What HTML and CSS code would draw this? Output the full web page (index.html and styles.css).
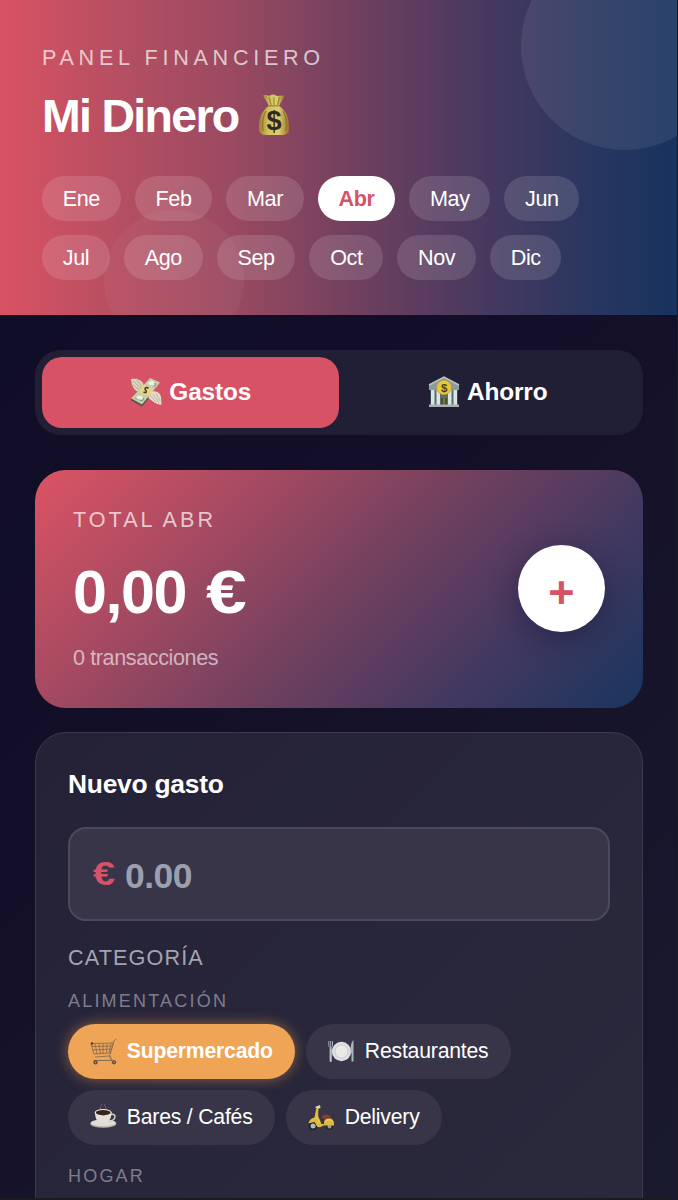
FILE: index.html
```html
<!DOCTYPE html>
<html lang="es">
<head>
<meta charset="utf-8">
<title>Mi Dinero</title>
<link rel="stylesheet" href="styles.css">
</head>
<body>
<div class="app">
  <header class="header">
    <div class="eyebrow">PANEL FINANCIERO</div>
    <h1 class="title"><span>Mi Dinero</span>
      <svg class="bag" viewBox="0 0 34 44">
        <defs>
          <linearGradient id="bagFill" x1="0" x2="1" y1="0" y2="0"><stop offset="0" stop-color="#9b7f35"/><stop offset=".3" stop-color="#d2bf5e"/><stop offset=".65" stop-color="#ddce70"/><stop offset="1" stop-color="#977328"/></linearGradient>
        </defs>
        <path d="M6 2.500C9 1 11 3.500 13 2.500s4-1.500 6 0 5-1 8.500.5C26 7 23 9.500 22.500 13h-11C11 9 8 7 6 2.500Z" fill="url(#bagFill)"/>
        <path d="M11.500 13h11C29 18 32.500 25 32 36c0 4-3 6-7 6H9c-4 0-7-2-7-6C1.500 25 5 18 11.500 13Z" fill="url(#bagFill)"/>
        <path d="M10.500 12.800h13M12 4l2 8M17 4v8M22.500 4l-2 8M9 18c-3 5-4 12-3 20M26 18c3 5 4 12 3 20" fill="none" stroke="#866320" stroke-width="1.200" opacity=".65"/>
        <text class="bag-sign" x="17" y="37" text-anchor="middle">$</text>
      </svg>
    </h1>
    <nav class="months">
      <span class="month">Ene</span><span class="month">Feb</span><span class="month">Mar</span><span class="month month-on">Abr</span><span class="month">May</span><span class="month">Jun</span>
      <span class="month">Jul</span><span class="month">Ago</span><span class="month">Sep</span><span class="month">Oct</span><span class="month">Nov</span><span class="month">Dic</span>
    </nav>
  </header>
  <main class="main">
    <div class="tabs">
      <div class="tab tab-on">
        <svg class="tab-icon" viewBox="0 0 32 30">
          <path d="M1 2c5-1 9 0 12 4l2 6-4 3C6 15 2 12 1 2Z" fill="#d9d6bd"/>
          <path d="M3 4l9 8M3 8l8 6M7 3l6 8" stroke="#a7a18c" stroke-width=".8" fill="none"/>
          <path d="M20 1 30 5.500 28 8 12 27.500 1 21.500 9 13Z" fill="#c6ceb2"/>
          <path d="M12 27.500 1 21.500v2L12 29.500 20 20v-2Z" fill="#4b5b48"/>
          <path d="M19 15c6-2 11 0 12 5l.5 8-4-1-4-2-5-4Z" fill="#e6dccd"/>
          <path d="M23 17l6 9M20 18l6 7M26 16l4 8" stroke="#b5a595" stroke-width=".8" fill="none"/>
          <path d="M12.500 7.500 23 12 20 19.500 9 15.500Z" fill="#e8d286"/>
          <path d="M19 4l7 3-2 3M5 21l7 3 2-3" stroke="#7d8e78" fill="none"/>
          <ellipse cx="21.500" cy="6" rx="3" ry="2" fill="#eef0d9"/><ellipse cx="9.500" cy="20.500" rx="3" ry="2" fill="#eef0d9"/>
          <path d="M18.500 11.500c-1.500-2-4.500-.5-3 1.500s1 3.500-2 2" stroke="#423d22" stroke-width="1.500" fill="none"/>
        </svg><span>Gastos</span>
      </div>
      <div class="tab">
        <svg class="tab-icon" viewBox="0 0 32 32">
          <path d="M16 1 31 9v5H1V9Z" fill="#8d9c9d"/>
          <path d="M1 9 16 1l15 8" fill="none" stroke="#b9c4c2" stroke-width="1.500"/>
          <path d="M2.500 14h27v15h-27Z" fill="#586d70"/>
          <path d="M3 14h3.500v15H3ZM8.500 14H12v15H8.500ZM20 14h3.500v15H20ZM25.500 14H29v15h-3.500Z" fill="#dce4df"/>
          <path d="M13 22h6v7h-6Z" fill="#514f35"/><path d="M16 22v7" stroke="#a3974e" stroke-width="1"/>
          <path d="M1 28.500h30V31H1Z" fill="#a8b2b0"/>
          <circle cx="16" cy="11.500" r="7.300" fill="#e6c83b" stroke="#b9962b" stroke-width=".6"/>
          <text class="coin-sign" x="16" y="15.500" text-anchor="middle">$</text>
        </svg><span>Ahorro</span>
      </div>
    </div>
    <section class="total">
      <div>
        <div class="total-label">TOTAL ABR</div>
        <div class="total-amount">0,00 <span class="euro">€</span></div>
        <div class="total-count">0 transacciones</div>
      </div>
      <div class="add"><span>+</span></div>
    </section>
    <section class="form">
      <h2 class="form-title">Nuevo gasto</h2>
      <div class="amount"><span class="amount-sign"><span class="euro">€</span></span><span class="amount-value">0.00</span></div>
      <div class="label">CATEGORÍA</div>
      <div class="group">ALIMENTACIÓN</div>
      <div class="cats">
        <div class="cat cat-on">
          <svg class="cat-icon" viewBox="0 0 27 27">
            <path d="M26.500 1 24 2.500 19.500 18 5 19M1 5.500l22.500-.5-3 10L4 16ZM1.500 8.500l21-.5M2.500 12l19-1M5 5.500 7 16M9 5.500 10.500 16M13 5.500V15.500M17 5.500 16.500 15M21 5l-2 10" fill="none" stroke="#8b704f" stroke-width=".9"/>
            <path d="M19.500 18 22 22.500H3.500" fill="none" stroke="#866b4d" stroke-width="1.200"/>
            <circle cx="5.500" cy="24.500" r="2.100" fill="#59483b"/><circle cx="24" cy="24.300" r="2.100" fill="#59483b"/><circle cx="5.500" cy="24.500" r=".8" fill="#c3aa8d"/><circle cx="24" cy="24.300" r=".8" fill="#c3aa8d"/>
            <circle cx="2" cy="5.500" r="1.200" fill="#533b2b"/>
          </svg><span>Supermercado</span>
        </div>
        <div class="cat">
          <svg class="cat-icon" viewBox="0 0 27 27">
            <circle cx="13.500" cy="13.500" r="9.700" fill="#dedfe1"/><circle cx="13.500" cy="13.500" r="6.600" fill="#e9e9ea" stroke="#c6c7cb" stroke-width=".8"/>
            <path d="M.9 3v5c0 2 3.600 2 3.600 0V3M2.700 3v9" fill="none" stroke="#a5aeb9" stroke-width="1"/>
            <path d="M2.700 11v12" stroke="#bac1c8" stroke-width="2.200" stroke-linecap="round"/>
            <path d="M25.500 2v21.500h-2V15h-1C22.500 9 23 4 25.500 2Z" fill="#aab4bf"/>
          </svg><span>Restaurantes</span>
        </div>
        <div class="cat">
          <svg class="cat-icon" viewBox="0 0 27 27">
            <path d="M11 5c-3-2 2-3 0-5M15 5c3-2-2-3 0-5" fill="none" stroke="#8d8c96" stroke-width="1" opacity=".5"/>
            <ellipse cx="13.300" cy="19.700" rx="13" ry="4" fill="#b9b6b0"/><ellipse cx="13.300" cy="18.900" rx="12.300" ry="3.300" fill="#deddd6"/>
            <path d="M21 10.500c6-1.500 5 6.500-2 6.500" fill="none" stroke="#d3d0c9" stroke-width="1.500"/>
            <path d="M5 8.500C5 15 8 20 13 20s8.500-5 8.500-11.500Z" fill="#e4e0d9"/>
            <ellipse cx="13.200" cy="8.500" rx="8.500" ry="3.600" fill="#efede6"/><ellipse cx="13.200" cy="8.700" rx="7.300" ry="2.700" fill="#38241d"/>
          </svg><span>Bares / Cafés</span>
        </div>
        <div class="cat">
          <svg class="cat-icon" viewBox="0 0 27 27">
            <circle cx="5" cy="22" r="4.200" fill="#20202a"/><circle cx="5" cy="22" r="2.500" fill="#b5bbc0"/>
            <circle cx="21.500" cy="22" r="3.800" fill="#25232a"/><circle cx="21.500" cy="22.500" r="2" fill="#9b9da0"/>
            <path d="M8 5l2.500-1c0 4-1 8 1 11l2 5H16c0-4 2-6 5-6 4 0 5.500 4 5 7.500H15c-2 2-4 2-6 1L6.500 18l-4 1-2 .5c.5-3.500 2.500-5.500 6-6Z" fill="#dfb840"/>
            <path d="M7 14c2-1 4 1 4 5M17 18c2-3 6-3 8 0" fill="none" stroke="#f4d76d" stroke-width="1"/>
            <path d="M14 12c3-2 6-2 8 0l1 2.500-8 .5Z" fill="#844326"/><path d="M7 3 12 1l.5 3L9 5Z" fill="#ddd6a6"/>
          </svg><span>Delivery</span>
        </div>
      </div>
      <div class="group">HOGAR</div>
    </section>
  </main>
</div>
</body>
</html>
```
FILE: styles.css
```css
* { box-sizing: border-box; }
html, body { margin: 0; height: 1200px; overflow: hidden; }
body { background: #1b1b22; font-family: "Liberation Sans", Arial, sans-serif; color: #fff; }
.app { width: 677px; height: 1198px; overflow: hidden; background: linear-gradient(135deg, #0f0c26 0%, #130f28 45%, #1a1a2e 100%); }

.header { position: relative; overflow: hidden; height: 315px; padding: 46px 42px 35px; background: linear-gradient(90deg, #d95262 0%, #b94f62 16%, #9b4a61 34%, #71405e 52%, #463960 72%, #27365f 88%, #18335f 100%); }
.header::before { content: ""; position: absolute; left: 521px; top: -58px; width: 208px; height: 208px; border-radius: 50%; background: rgba(255, 255, 255, .08); }
.header::after { content: ""; position: absolute; left: 104px; top: 210px; width: 140px; height: 140px; border-radius: 50%; background: rgba(255, 255, 255, .04); }
.eyebrow { font-size: 21.6px; line-height: 24px; letter-spacing: 4.7px; color: rgba(255, 255, 255, .7); }
.title { display: flex; gap: 18px; margin: 20px 0 34px; font-size: 46.5px; line-height: 52px; height: 52px; font-weight: 700; letter-spacing: -1.7px; }
.bag { width: 34px; height: 44px; margin-top: 3px; }
.bag-sign { font-size: 27px; font-weight: 700; letter-spacing: 0; fill: #302a20; }
.coin-sign { font-size: 11.5px; font-weight: 700; fill: #514318; }
.months { display: flex; flex-wrap: wrap; gap: 14px; }
.month { height: 45px; line-height: 45px; padding: 0 20.75px; border-radius: 23px; font-size: 21.6px; letter-spacing: -.4px; background: rgba(255, 255, 255, .13); }
.month-on { background: #fff; color: #d65265; font-weight: 700; }

.main { padding: 35px 34px 0 35px; }
.tabs { display: flex; height: 84.5px; padding: 7px; border-radius: 26px; background: #211f35; }
.tab { flex: 1; display: flex; align-items: center; justify-content: center; gap: 7.5px; border-radius: 20px; font-size: 24.4px; letter-spacing: -.15px; font-weight: 700; }
.tab-on { background: #d65264; }
.tab-icon { width: 32px; height: 32px; }

.total { display: flex; justify-content: space-between; align-items: center; height: 238px; margin-top: 35px; padding: 0 38px; border-radius: 31px; background: linear-gradient(135deg, #dc5364 0%, #a14961 30%, #6f405e 53%, #463960 74%, #18355f 100%); }
.total-label { font-size: 21.6px; line-height: 24px; letter-spacing: 3px; color: rgba(255, 255, 255, .7); }
.total-amount { margin-top: 26px; font-size: 61px; line-height: 68px; font-weight: 700; letter-spacing: -1.4px; white-space: nowrap; }
.total-amount .euro { margin-left: 4.5px; }
.total-count { margin-top: 20px; font-size: 21.6px; line-height: 24px; letter-spacing: -.4px; color: rgba(255, 255, 255, .6); }
.euro { display: inline-block; transform: scaleX(1.2); transform-origin: 0 50%; }
.add { width: 87px; height: 87px; padding-top: 4px; border-radius: 50%; background: #fff; color: #d65264; box-shadow: 0 7px 28px rgba(20, 15, 45, .4); font-size: 45px; line-height: 87px; font-weight: 700; text-align: center; }

.form { height: 600px; margin-top: 24px; padding: 36px 32px 0; border: 1.5px solid #3b394d; border-radius: 31px; background: linear-gradient(135deg, #252238, #2b2a3c); }
.form-title { margin: 0; font-size: 26.4px; line-height: 30px; letter-spacing: -.25px; }
.amount { display: flex; align-items: center; height: 94px; margin-top: 28.5px; padding: 0 23px; border: 2px solid #4b495b; border-radius: 18px; background: #373547; font-weight: 700; }
.amount-sign { width: 32px; margin-top: 0; font-size: 33px; color: #d65269; }
.amount-value { font-size: 35.5px; margin-top: 4px; letter-spacing: -.5px; color: #9ca0ae; }
.label { margin-top: 24.5px; font-size: 21.6px; line-height: 24px; letter-spacing: 1.15px; color: #a5a4b0; }
.group { margin-top: 21px; font-size: 18px; line-height: 20px; letter-spacing: 2.2px; color: #7f7d8c; }
.cats { display: flex; flex-wrap: wrap; gap: 10.7px 11px; margin-top: 13px; }
.cat { display: flex; align-items: center; gap: 9.5px; height: 55.4px; padding: 0 22.3px; border-radius: 28px; font-size: 21.2px; letter-spacing: -.2px; background: #373547; }
.cat-on { background: #f0a456; font-weight: 700; box-shadow: 0 0 14px rgba(240, 164, 86, .5); }
.cat-icon { width: 27px; height: 27px; }
```
